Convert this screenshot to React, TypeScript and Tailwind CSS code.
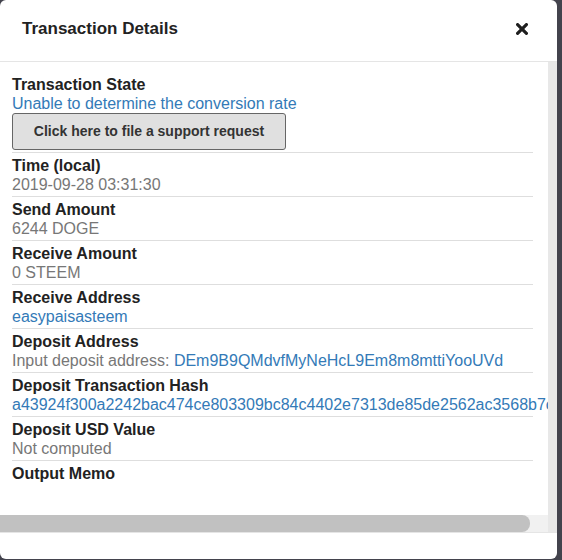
import React from "react";

const Row = ({
  label,
  children,
  first,
}: {
  label: string;
  children?: React.ReactNode;
  first?: boolean;
}) => (
  <div
    className={
      "whitespace-nowrap pb-[2px] leading-[19px] " +
      (first ? "pt-0" : "pt-[3px] border-t border-[#dedede]")
    }
  >
    <div className="text-[16px] font-bold text-[#222]">{label}</div>
    {children}
  </div>
);

export default function App() {
  return (
    <div
      className="w-[562px] h-[560px] bg-[#43434d] overflow-hidden"
      style={{ fontFamily: '"Liberation Sans", Arial, sans-serif' }}
    >
      <div className="w-[557px] h-[559px] bg-white rounded-[6px] flex flex-col overflow-hidden">
        {/* header */}
        <div className="h-[62px] shrink-0 border-b border-[#e5e5e5] flex items-center justify-between pl-[22px] pr-[29px] pb-[4px]">
          <div className="text-[17px] font-bold text-[#222]">Transaction Details</div>
          <svg width="12" height="12" viewBox="0 0 12 12">
            <path d="M1.6 1.6 L10.4 10.4 M10.4 1.6 L1.6 10.4" stroke="#1f1f1f" strokeWidth="3.2" strokeLinecap="round" />
          </svg>
        </div>

        {/* body */}
        <div className="h-[470px] shrink-0 flex">
          <div className="flex-1 min-w-0 flex flex-col">
            <div className="flex-1 overflow-hidden pl-[12px] pr-[15px] pt-[13px] text-[16px]">
              <Row label="Transaction State" first>
                <div className="text-[#337ab7]">Unable to determine the conversion rate</div>
                <div>
                  <button className="w-[274px] h-[37px] bg-[#e0e0e0] border border-[#666] rounded-[3px] text-[14px] font-bold text-[#333]">
                    Click here to file a support request
                  </button>
                </div>
              </Row>
              <Row label="Time (local)">
                <div className="text-[#777]">2019-09-28 03:31:30</div>
              </Row>
              <Row label="Send Amount">
                <div className="text-[#777]">6244 DOGE</div>
              </Row>
              <Row label="Receive Amount">
                <div className="text-[#777]">0 STEEM</div>
              </Row>
              <Row label="Receive Address">
                <div className="text-[#337ab7]">easypaisasteem</div>
              </Row>
              <Row label="Deposit Address">
                <div className="text-[#777]">
                  Input deposit address:{" "}
                  <span className="text-[#337ab7]">DEm9B9QMdvfMyNeHcL9Em8m8mttiYooUVd</span>
                </div>
              </Row>
              <Row label="Deposit Transaction Hash">
                <div className="text-[#337ab7]">
                  a43924f300a2242bac474ce803309bc84c4402e7313de85de2562ac3568b7c0e1
                </div>
              </Row>
              <Row label="Deposit USD Value">
                <div className="text-[#777]">Not computed</div>
              </Row>
              <Row label="Output Memo">
                <div className="h-[19px]"></div>
              </Row>
            </div>
            {/* horizontal scrollbar */}
            <div className="h-[17px] shrink-0 bg-[#f1f1f1] flex">
              <div className="w-[530px] h-full bg-[#c1c1c1] rounded-r-[8px]"></div>
            </div>
          </div>
          {/* vertical scrollbar track */}
          <div className="w-[9px] shrink-0 bg-[#e8e8e8]"></div>
        </div>

        {/* footer */}
        <div className="flex-1 border-t border-[#e5e5e5]"></div>
      </div>
    </div>
  );
}
